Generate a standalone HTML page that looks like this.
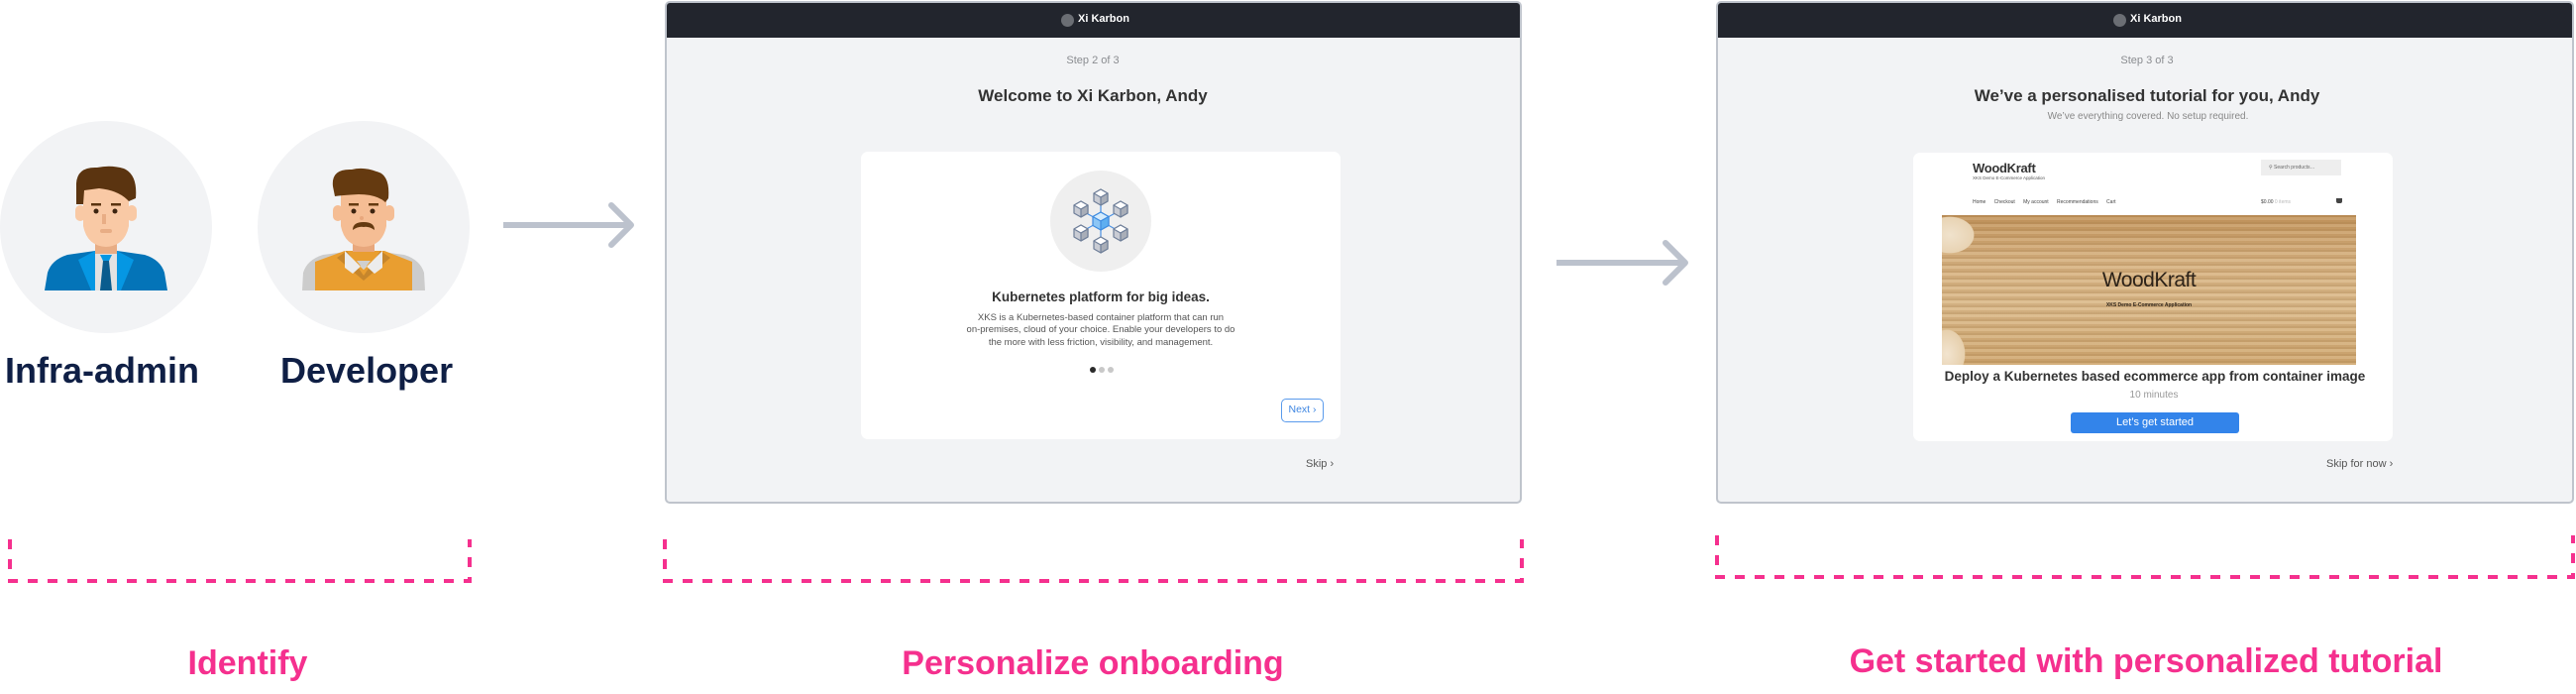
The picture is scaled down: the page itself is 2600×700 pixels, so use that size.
<!DOCTYPE html>
<html><head><meta charset="utf-8"><style>
*{margin:0;padding:0;box-sizing:border-box}
body{width:2600px;height:700px;background:#fff;position:relative;overflow:hidden;font-family:"Liberation Sans",Arial,sans-serif}
.a{position:absolute;white-space:nowrap}
.c{text-align:center;transform:translateX(-50%)}
.scr{position:absolute;top:1px;height:507px;background:#f2f3f5;border:2px solid #bfc4cc;border-radius:5px;overflow:hidden}
.hdr{position:absolute;left:0;top:0;right:0;height:35px;background:#22252d}
</style></head><body>

<svg class="a" style="left:0;top:0" width="2600" height="700" viewBox="0 0 2600 700">
<circle cx="107" cy="229" r="107" fill="#f2f3f5"/>
<circle cx="367" cy="229" r="107" fill="#f2f3f5"/>
<g>
<path d="M45 293 L48 275 Q52 262 68 257 L96 253 L118 253 L146 257 Q162 262 166 275 L169 293Z" fill="#0474b8"/>
<path d="M96 253 L79 262 L92 293 L102 293Z M118 253 L135 262 L122 293 L112 293Z" fill="#0597e3"/>
<rect x="96" y="253" width="22" height="40" fill="#e2e2e2"/>
<path d="M102 257 L112 257 L110 263 L113 293 L101 293 L104 263Z" fill="#0a5c8e"/>
<path d="M101 257 L113 257 L110 263 L104 263Z" fill="#0597e3"/>
<rect x="96" y="240" width="22" height="16" fill="#e8ad85"/>
<rect x="76" y="207" width="10" height="16" rx="5" fill="#f9c9a5"/>
<rect x="128" y="207" width="10" height="16" rx="5" fill="#f9c9a5"/>
<path d="M84 190 L130 190 L130 228 Q126 248 107 249 Q88 248 84 228Z" fill="#f9c9a5"/>
<path d="M77 185 Q78 168 98 169 Q112 166 125 170 Q139 176 137 200 L130 203 Q120 192 100 190 L85 192 L84 206 L77 206Z" fill="#5b3410"/>
<rect x="92" y="205" width="10" height="2.5" fill="#5b3410"/><rect x="112" y="205" width="10" height="2.5" fill="#5b3410"/>
<circle cx="97" cy="213" r="2.5" fill="#3d2410"/><circle cx="116" cy="213" r="2.5" fill="#3d2410"/>
<path d="M103 216 L107 216 L107 226 L103 226Z" fill="#e8ad85"/>
<rect x="101" y="231" width="12" height="4" rx="2" fill="#e8ad85"/>
</g>
<g>
<path d="M305 293 L306 275 Q310 262 326 257 L356 253 L378 253 L408 257 Q424 262 428 275 L429 293Z" fill="#cccccc"/>
<path d="M318 293 L318 264 L348 253 L388 253 L416 264 L416 293Z" fill="#e99e30"/>
<path d="M350 253 L367 278 L384 253 L394 260 L367 283 L340 260Z" fill="#c6862c"/>
<path d="M348 253 L367 272 L386 253 L386 270 L378 276 L367 266 L356 276 L348 270Z" fill="#ececec"/>
<path d="M360 263 L374 263 L367 272Z" fill="#cfcfcf"/>
<rect x="356" y="240" width="22" height="14" fill="#e8a77c"/>
<rect x="336" y="207" width="10" height="16" rx="5" fill="#f5bd94"/>
<rect x="388" y="207" width="10" height="16" rx="5" fill="#f5bd94"/>
<path d="M344 190 L390 190 L390 228 Q386 248 367 249 Q348 248 344 228Z" fill="#f5bd94"/>
<path d="M336 188 Q334 170 355 171 Q367 168 380 173 Q394 176 392 200 L389 204 Q380 196 362 196 Q344 197 338 198Z" fill="#653a10"/>
<rect x="352" y="205" width="10" height="2.5" fill="#653a10"/><rect x="372" y="205" width="10" height="2.5" fill="#653a10"/>
<circle cx="357" cy="213" r="2.5" fill="#3d2410"/><circle cx="376" cy="213" r="2.5" fill="#3d2410"/>
<circle cx="365" cy="220" r="2" fill="#e8a77c"/>
<path d="M356 232 Q356 224 367 224 Q378 224 378 232 Q372 228 367 229 Q362 228 356 232Z" fill="#653a10"/>
</g>
<g stroke="#bcc2cd" stroke-width="6" fill="none" stroke-linecap="round" stroke-linejoin="round">
<line x1="508" y1="227" x2="636" y2="227" stroke-linecap="butt"/>
<polyline points="617,207 637,227 617,247"/>
<line x1="1571" y1="265" x2="1700" y2="265" stroke-linecap="butt"/>
<polyline points="1681,245 1701,265 1681,285"/>
</g>
<g stroke="#f5308e" stroke-width="4" fill="none" stroke-dasharray="10 10">
<polyline points="10,544 10,586 474,586 474,544"/>
<polyline points="671,544 671,586 1536,586 1536,544"/>
<polyline points="1733,540 1733,582 2597,582 2597,540"/>
</g>
</svg>

<div class="a" style="left:5px;top:353px;font-size:36px;font-weight:bold;color:#0f1f45">Infra-admin</div>
<div class="a" style="left:283px;top:353px;font-size:36px;font-weight:bold;color:#0f1f45">Developer</div>

<div class="a c" style="left:250px;top:650px;font-size:34px;font-weight:bold;color:#f5308e">Identify</div>
<div class="a c" style="left:1103px;top:650px;font-size:34px;font-weight:bold;color:#f5308e">Personalize onboarding</div>
<div class="a c" style="left:2166px;top:648px;font-size:34px;font-weight:bold;color:#f5308e">Get started with personalized tutorial</div>

<div class="scr" style="left:671px;width:865px">
 <div class="hdr"></div>
 <div class="a" style="left:398px;top:11px;width:13px;height:13px;border-radius:50%;background:#6b6e74"></div>
 <div class="a" style="left:415px;top:10px;font-size:11px;font-weight:bold;color:#fff">Xi Karbon</div>
 <div class="a c" style="left:430px;top:52px;font-size:11px;color:#8a8c90">Step 2 of 3</div>
 <div class="a c" style="left:430px;top:84px;font-size:17px;font-weight:bold;color:#333">Welcome to Xi Karbon, Andy</div>
 <div class="a" style="left:196px;top:150px;width:484px;height:290px;background:#fff;border-radius:7px"></div>
 <div class="a c" style="left:438px;top:289px;font-size:13.5px;font-weight:bold;color:#333">Kubernetes platform for big ideas.</div>
 <div class="a c" style="left:438px;top:312px;font-size:9.5px;line-height:12.3px;color:#555">XKS is a Kubernetes-based container platform that can run<br>on-premises, cloud of your choice. Enable your developers to do<br>the more with less friction, visibility, and management.</div>
 <div class="a" style="left:427px;top:367px;width:6px;height:6px;border-radius:50%;background:#2a2a2a"></div>
 <div class="a" style="left:436px;top:367px;width:6px;height:6px;border-radius:50%;background:#c8c8c8"></div>
 <div class="a" style="left:445px;top:367px;width:6px;height:6px;border-radius:50%;background:#c8c8c8"></div>
 <div class="a" style="left:620px;top:399px;width:43px;height:24px;border:1.5px solid #5a9bec;border-radius:5px;font-size:10.5px;color:#3e86e2;line-height:21px;text-align:center">Next ›</div>
 <div class="a" style="left:645px;top:459px;font-size:11px;color:#555">Skip ›</div>
</div>
<svg class="a" style="left:1059px;top:171px" width="104" height="104" viewBox="-52 -52 104 104">
<circle cx="0" cy="0" r="51" fill="#efefef"/>
<g stroke-width="1.2">
<line x1="0" y1="-23" x2="0" y2="23" stroke="#4a90e2"/><line x1="-20" y1="-11" x2="20" y2="11" stroke="#4a90e2"/><line x1="-20" y1="11" x2="20" y2="-11" stroke="#4a90e2"/>
</g>
<g stroke="#6f7f99" stroke-width="1.2" stroke-linejoin="round">
<g transform="translate(0,-24)"><path d="M0 -8 L7 -4 L7 4 L0 8 L-7 4 L-7 -4Z" fill="#c9ccd4"/><path d="M0 -8 L7 -4 L0 0 L-7 -4Z" fill="#fff"/><path d="M0 0 L7 -4 L7 4 L0 8Z" fill="#a9aeb8"/></g>
<g transform="translate(-20,-12)"><path d="M0 -8 L7 -4 L7 4 L0 8 L-7 4 L-7 -4Z" fill="#c9ccd4"/><path d="M0 -8 L7 -4 L0 0 L-7 -4Z" fill="#fff"/><path d="M0 0 L7 -4 L7 4 L0 8Z" fill="#a9aeb8"/></g>
<g transform="translate(20,-12)"><path d="M0 -8 L7 -4 L7 4 L0 8 L-7 4 L-7 -4Z" fill="#c9ccd4"/><path d="M0 -8 L7 -4 L0 0 L-7 -4Z" fill="#fff"/><path d="M0 0 L7 -4 L7 4 L0 8Z" fill="#a9aeb8"/></g>
<g transform="translate(-20,12)"><path d="M0 -8 L7 -4 L7 4 L0 8 L-7 4 L-7 -4Z" fill="#c9ccd4"/><path d="M0 -8 L7 -4 L0 0 L-7 -4Z" fill="#fff"/><path d="M0 0 L7 -4 L7 4 L0 8Z" fill="#a9aeb8"/></g>
<g transform="translate(20,12)"><path d="M0 -8 L7 -4 L7 4 L0 8 L-7 4 L-7 -4Z" fill="#c9ccd4"/><path d="M0 -8 L7 -4 L0 0 L-7 -4Z" fill="#fff"/><path d="M0 0 L7 -4 L7 4 L0 8Z" fill="#a9aeb8"/></g>
<g transform="translate(0,24)"><path d="M0 -8 L7 -4 L7 4 L0 8 L-7 4 L-7 -4Z" fill="#c9ccd4"/><path d="M0 -8 L7 -4 L0 0 L-7 -4Z" fill="#fff"/><path d="M0 0 L7 -4 L7 4 L0 8Z" fill="#a9aeb8"/></g>
<g stroke="#3d8be0"><path d="M0 -9 L8 -4.5 L8 4.5 L0 9 L-8 4.5 L-8 -4.5Z" fill="#8cc6f5"/><path d="M0 -9 L8 -4.5 L0 0 L-8 -4.5Z" fill="#d5ecfd"/><path d="M0 0 L8 -4.5 L8 4.5 L0 9Z" fill="#5eaef0"/></g>
</g>
</svg>

<div class="scr" style="left:1732px;width:866px">
 <div class="hdr"></div>
 <div class="a" style="left:399px;top:11px;width:13px;height:13px;border-radius:50%;background:#6b6e74"></div>
 <div class="a" style="left:416px;top:10px;font-size:11px;font-weight:bold;color:#fff">Xi Karbon</div>
 <div class="a c" style="left:433px;top:52px;font-size:11px;color:#8a8c90">Step 3 of 3</div>
 <div class="a c" style="left:433px;top:84px;font-size:17px;font-weight:bold;color:#333">We’ve a personalised tutorial for you, Andy</div>
 <div class="a c" style="left:434px;top:109px;font-size:10px;color:#888">We’ve everything covered. No setup required.</div>
 <div class="a" style="left:197px;top:151px;width:484px;height:291px;background:#fff;border-radius:7px"></div>
 <div class="a" style="left:257px;top:159px;font-size:13px;font-weight:bold;color:#333;letter-spacing:-0.3px">WoodKraft</div>
 <div class="a" style="left:257px;top:174px;font-size:4.5px;color:#555">XKS Demo E-Commerce Application</div>
 <div class="a" style="left:548px;top:158px;width:81px;height:16px;background:#eee;font-size:5px;color:#666;line-height:16px;padding-left:8px">⚲ Search products…</div>
 <div class="a" style="left:257px;top:198px;font-size:5px;color:#444">Home&nbsp;&nbsp;&nbsp;&nbsp;&nbsp;&nbsp;Checkout&nbsp;&nbsp;&nbsp;&nbsp;&nbsp;&nbsp;My account&nbsp;&nbsp;&nbsp;&nbsp;&nbsp;&nbsp;Recommendations&nbsp;&nbsp;&nbsp;&nbsp;&nbsp;&nbsp;Cart</div>
 <div class="a" style="left:548px;top:198px;font-size:5px;color:#444">$0.00 <span style="color:#bbb">0 items</span></div>
 <div class="a" style="left:624px;top:197px;width:6px;height:5px;background:#444;border-radius:0 0 2px 2px"></div>
 <div class="a" style="left:226px;top:214px;width:418px;height:151px;background:
   radial-gradient(ellipse 40px 30px at 8px 20px,#f0e2cc 0,#e8d3b3 60%,transparent 62%),
   radial-gradient(ellipse 30px 40px at 5px 140px,#f2e4cf 0,#e6cfac 60%,transparent 62%),
   repeating-linear-gradient(180deg,rgba(140,95,40,.22) 0 2px,rgba(255,240,210,.10) 2px 5px,rgba(150,100,40,.12) 5px 7px),
   linear-gradient(180deg,#c39660,#d6b283 30%,#dbbb8e 60%,#cfa873)"></div>
 <div class="a c" style="left:435px;top:268px;font-size:21px;color:#2c2218;letter-spacing:-0.5px">WoodKraft</div>
 <div class="a c" style="left:435px;top:302px;font-size:5px;color:#2c2218;font-weight:bold">XKS Demo E-Commerce Application</div>
 <div class="a c" style="left:441px;top:369px;font-size:13.5px;font-weight:bold;color:#333">Deploy a Kubernetes based ecommerce app from container image</div>
 <div class="a c" style="left:440px;top:390px;font-size:10px;color:#999">10 minutes</div>
 <div class="a" style="left:356px;top:413px;width:170px;height:21px;background:#3384ea;border-radius:3px;color:#fff;font-size:11px;line-height:21px;text-align:center">Let’s get started</div>
 <div class="a" style="left:614px;top:459px;font-size:11px;color:#555">Skip for now ›</div>
</div>
</body></html>
